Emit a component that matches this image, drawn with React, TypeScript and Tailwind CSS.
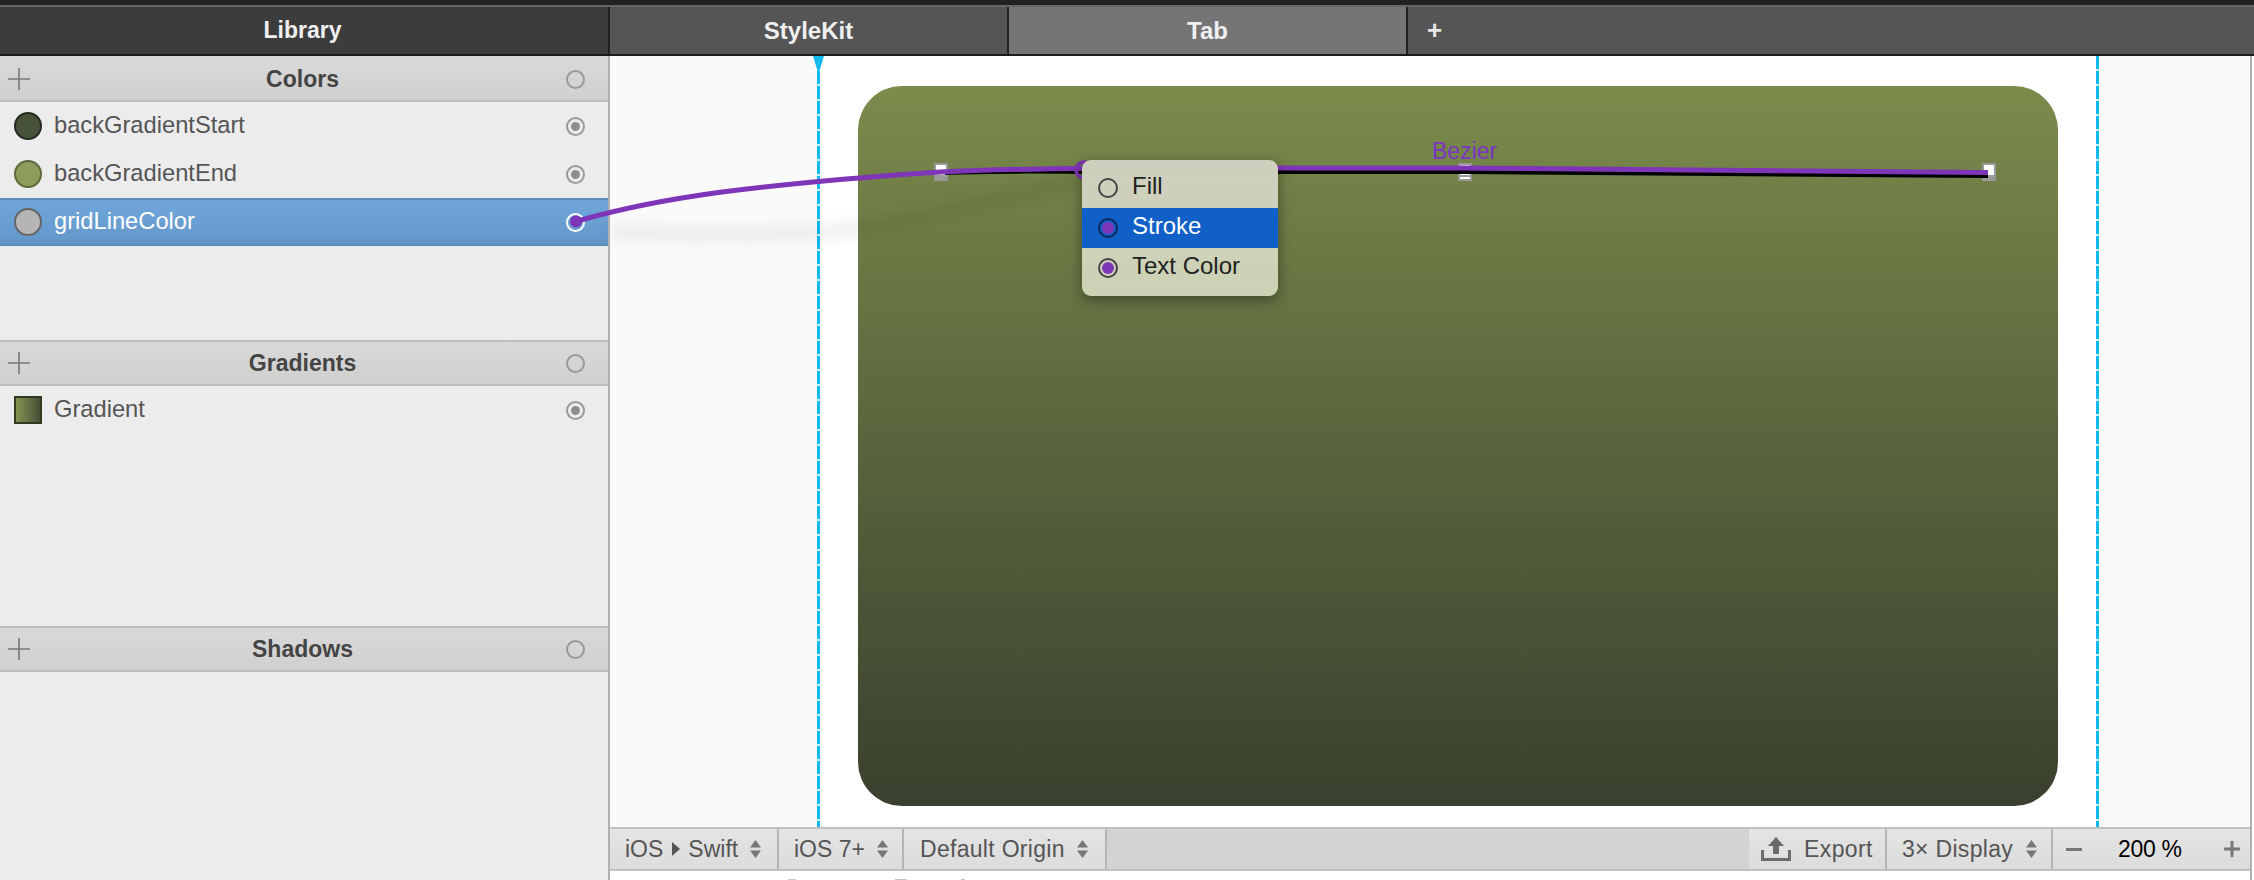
import type { ReactNode } from "react";

type Row = { name: string; swatch: string };

const colorRows: Row[] = [
  { name: "backGradientStart", swatch: "bg-[#47523a] border-[#252c20] rounded-full" },
  { name: "backGradientEnd", swatch: "bg-[#8c9c5c] border-[#5a6a3a] rounded-full" },
];

function Radio({ dot, className }: { dot?: boolean; className?: string }) {
  return (
    <span
      className={`w-[19px] h-[19px] rounded-full border-2 flex items-center justify-center ${
        className ?? "border-[#9a9a9a]"
      }`}
    >
      {dot && <span className="w-[9px] h-[9px] rounded-full bg-[#8e8e8e]" />}
    </span>
  );
}

function SectionHeader({ title, first }: { title: string; first?: boolean }) {
  return (
    <div
      className={`h-[46px] shrink-0 relative flex items-center justify-center pr-[3px] bg-gradient-to-b from-[#d9d9d9] to-[#d0d0d0] border-b-2 border-[#bdbdbd] ${
        first ? "pt-[2px]" : "border-t-2"
      }`}
    >
      <svg
        width="22"
        height="22"
        viewBox="0 0 22 22"
        className={`absolute left-[8px] ${first ? "top-[12px]" : "top-[10px]"}`}
      >
        <path d="M0 11H22M11 0V22" stroke="#777" strokeWidth="1.6" />
      </svg>
      <span className="text-[23px] font-bold text-[#444]">{title}</span>
      <div className={`absolute left-[566px] ${first ? "top-[14px]" : "top-[12px]"}`}>
        <Radio />
      </div>
    </div>
  );
}

function ListRow({ name, swatch }: Row) {
  return (
    <div className="h-[48px] flex items-center pl-[14px] pr-[23px]">
      <span className={`w-[28px] h-[28px] border-2 ${swatch}`} />
      <span className="ml-[12px] flex-1 text-[23.7px] text-[#555]">{name}</span>
      <Radio dot />
    </div>
  );
}

function Library() {
  return (
    <div className="w-[610px] shrink-0 border-r-2 border-[#b0b0b0] bg-[#ececec] flex flex-col">
      <SectionHeader title="Colors" first />
      {colorRows.map((row) => (
        <ListRow key={row.name} {...row} />
      ))}
      <div className="h-[48px] flex items-center pl-[14px] pr-[23px] bg-gradient-to-b from-[#70a7dc] to-[#6496c8] border-y-2 border-[#5a8db8]">
        <span className="w-[28px] h-[28px] border-2 rounded-full bg-[#b5b5b5] border-[#666]" />
        <span className="ml-[12px] flex-1 text-[23.7px] text-white">gridLineColor</span>
        <Radio className="border-white" />
      </div>
      <div className="h-[94px]" />
      <SectionHeader title="Gradients" />
      <ListRow
        name="Gradient"
        swatch="bg-gradient-to-r from-[#84944f] to-[#465036] border-[#2f3a20]"
      />
      <div className="h-[192px]" />
      <SectionHeader title="Shadows" />
    </div>
  );
}

function Tab({ label, active }: { label: string; active?: boolean }) {
  return (
    <div
      className={`w-[399px] flex items-center justify-center text-[24px] font-bold text-[#f0f0f0] border-r-2 border-[#222] ${
        active ? "bg-[#757575]" : "bg-[#555]"
      }`}
    >
      {label}
    </div>
  );
}

function UpDown() {
  return (
    <svg width="11" height="18" viewBox="0 0 11 18" className="shrink-0">
      <path d="M5.5 0L11 7.5H0Z M5.5 18L0 10.5H11Z" fill="#777" />
    </svg>
  );
}

function Segment({ width, className, children }: { width: string; className?: string; children: ReactNode }) {
  return (
    <div
      className={`${width} shrink-0 h-full flex items-center border-r-2 border-[#b5b5b5] bg-gradient-to-b from-[#e4e4e4] to-[#dcdcdc] text-[23px] text-[#555] ${
        className ?? ""
      }`}
    >
      {children}
    </div>
  );
}

function Footer() {
  return (
    <div className="h-[44px] shrink-0 flex border-y-2 border-[#c0c0c0] bg-[#d3d3d3] whitespace-nowrap">
      <Segment width="w-[169px]" className="pl-[15px]">
        <span>iOS</span>
        <svg width="8" height="14" viewBox="0 0 8 14" className="ml-[9px] mr-[8px]">
          <path d="M0 0L8 7L0 14Z" fill="#555" />
        </svg>
        <span>Swift</span>
        <span className="ml-[12px]">
          <UpDown />
        </span>
      </Segment>
      <Segment width="w-[125px]" className="pl-[15px]">
        <span>iOS 7+</span>
        <span className="ml-[12px]">
          <UpDown />
        </span>
      </Segment>
      <Segment width="w-[203px]" className="pl-[16px]">
        <span className="tracking-[0.3px]">Default Origin</span>
        <span className="ml-[12px]">
          <UpDown />
        </span>
      </Segment>
      <div className="flex-1" />
      <Segment width="w-[138px]" className="pl-[12px]">
        <svg width="30" height="24" viewBox="0 0 30 24" className="shrink-0">
          <path d="M15 0L23 9H18V17H12V9H7Z M0 13H3V21H27V13H30V24H0Z" fill="#6b6b6b" />
        </svg>
        <span className="ml-[13px] tracking-[0.4px]">Export</span>
      </Segment>
      <Segment width="w-[166px]" className="pl-[15px]">
        <span className="tracking-[0.3px]">3× Display</span>
        <span className="ml-[13px]">
          <UpDown />
        </span>
      </Segment>
      <div className="w-[197px] shrink-0 h-full flex items-center bg-gradient-to-b from-[#e4e4e4] to-[#dcdcdc] pl-[13px] text-[23px] text-black">
        <span className="w-[16px] h-[3px] bg-[#777]" />
        <span className="ml-[36px] w-[106px] tracking-[-0.3px]">200 %</span>
        <svg width="16" height="16" viewBox="0 0 16 16">
          <path d="M0 8H16M8 0V16" stroke="#777" strokeWidth="3" />
        </svg>
      </div>
    </div>
  );
}

function GuideLine() {
  return (
    <div className="w-[3px] shrink-0 bg-[repeating-linear-gradient(to_bottom,#12b9ef_0,#12b9ef_13px,#d8eef6_13px,#d8eef6_15px)]" />
  );
}

function Canvas() {
  return (
    <div className="flex-1 min-h-0 flex">
      <div className="w-[207px] shrink-0 bg-[#fafafa]" />
      <GuideLine />
      <div className="flex-1 bg-white px-[38px] pt-[30px] pb-[21px]">
        <div className="h-full rounded-[44px] bg-gradient-to-b from-[#7b8b4b] to-[#3a402e]" />
      </div>
      <GuideLine />
      <div className="w-[151px] shrink-0 bg-[#fafafa]" />
    </div>
  );
}

function PopupRow({ label, selected, children }: { label: string; selected?: boolean; children: ReactNode }) {
  return (
    <div className={`h-[40px] flex items-center pl-[16px] ${selected ? "bg-[#1060c8] text-white" : "text-[#222]"}`}>
      {children}
      <span className="ml-[14px] -mt-[4px] text-[24px] leading-none">{label}</span>
    </div>
  );
}

function ConnectionPopup() {
  return (
    <div className="absolute left-[1082px] top-[160px] w-[196px] h-[136px] rounded-[9px] bg-gradient-to-b from-[#cfcfbf] to-[#ccd3b5] py-[8px] shadow-[0_4px_14px_rgba(0,0,0,0.4)]">
      <PopupRow label="Fill">
        <span className="w-[20px] h-[20px] rounded-full border-2 border-[#444]" />
      </PopupRow>
      <PopupRow label="Stroke" selected>
        <span className="w-[20px] h-[20px] rounded-full border-2 border-[#0a2a5a] flex items-center justify-center">
          <span className="w-[12px] h-[12px] rounded-full bg-[#7f35b8]" />
        </span>
      </PopupRow>
      <PopupRow label="Text Color">
        <span className="w-[20px] h-[20px] rounded-full border-2 border-[#444] flex items-center justify-center">
          <span className="w-[12px] h-[12px] rounded-full bg-[#7f35b8]" />
        </span>
      </PopupRow>
    </div>
  );
}

function Handle({ x, striped }: { x: number; striped?: boolean }) {
  return (
    <g transform={`translate(${x - 7} 163)`}>
      <rect width="14" height="18" fill="#999" />
      {striped ? (
        <path d="M2 2H12V3.5H2Z M2 7.5H12V12H2Z M2 14H12V16H2Z" fill="#fff" />
      ) : (
        <rect x="2" y="2" width="10" height="10" fill="#fff" />
      )}
    </g>
  );
}

function Connections() {
  return (
    <svg width="2254" height="880" viewBox="0 0 2254 880" fill="none" className="absolute left-0 top-0 pointer-events-none">
      <defs>
        <filter id="soft" x="-10%" y="-100%" width="120%" height="300%">
          <feGaussianBlur stdDeviation="7" />
        </filter>
      </defs>
      <path
        d="M612 232C700 236 840 236 900 222C980 204 1040 190 1085 180"
        stroke="#000"
        strokeOpacity="0.07"
        strokeWidth="12"
        filter="url(#soft)"
      />
      <Handle x={941} />
      <Handle x={1465} striped />
      <Handle x={1989} />
      <path d="M945 173C990 171 1040 171.5 1080 172L1464 172L1988 176" stroke="#000" strokeWidth="4" />
      <circle cx="1084" cy="170" r="8" stroke="#7f35b8" strokeWidth="3.5" />
      <path
        d="M576 221.5C660 197 760 184 940 172C1000 169 1060 168.5 1100 168L1464 168L1988 172.5"
        stroke="#7f35b8"
        strokeWidth="5"
      />
      <circle cx="576" cy="221.5" r="6" fill="#7f35b8" />
      {/* guide arrow */}
      <path d="M813 56H824L818.5 74Z" fill="#12b9ef" />
    </svg>
  );
}

export default function App() {
  return (
    <div className="relative w-[2254px] h-[880px] overflow-hidden bg-white flex flex-col [font-family:'Liberation_Sans',Arial,sans-serif]">
      {/* title bar */}
      <div className="h-[5px] shrink-0 bg-[#222]" />
      <div className="h-[51px] shrink-0 flex border-t-2 border-b-2 border-t-[#666] border-b-[#1c1c1c] bg-[#555] whitespace-nowrap">
        <div className="w-[610px] flex items-center justify-center bg-[#3c3c3c] border-r-2 border-[#222] text-[23px] font-bold text-[#f0f0f0] pr-[3px]">
          Library
        </div>
        <Tab label="StyleKit" />
        <Tab label="Tab" active />
        <div className="flex-1 pl-[19px] flex items-center text-[26px] font-bold text-[#e6e6e6]">+</div>
      </div>

      <div className="flex-1 min-h-0 flex">
        <Library />
        <div className="w-[1642px] shrink-0 flex flex-col border-r-2 border-[#b0b0b0]">
          <Canvas />
          <Footer />
          {/* tops of the next row, cut off by the window */}
          <div className="h-[9px] shrink-0 bg-white flex items-end pl-[178px]">
            <span className="w-[8px] h-[1px] bg-[#c4c4c4]" />
            <span className="ml-[99px] w-[12px] h-[1px] bg-[#c4c4c4]" />
            <span className="ml-[54px] w-[4px] h-[1px] bg-[#c4c4c4]" />
          </div>
        </div>
        <div className="flex-1 bg-white" />
      </div>

      <Connections />
      <span className="absolute left-[1432px] top-[134px] text-[23px] text-[#7b35c0]">Bezier</span>
      <ConnectionPopup />
    </div>
  );
}
